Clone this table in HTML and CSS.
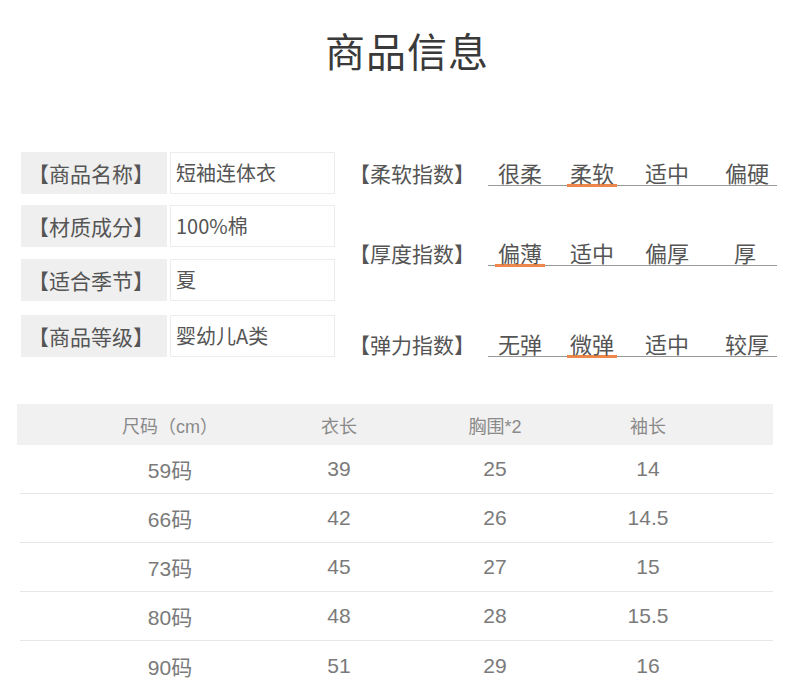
FILE: index.html
```html
<!DOCTYPE html>
<html lang="zh-CN">
<head>
<meta charset="utf-8">
<title>商品信息</title>
<link rel="stylesheet" href="styles.css">
</head>
<body>
<div class="page">
  <h1 class="title">商品信息</h1>

  <section class="info">
    <div class="specs">
      <div class="spec"><div class="spec-label">【商品名称】</div><div class="spec-value">短袖连体衣</div></div>
      <div class="spec"><div class="spec-label">【材质成分】</div><div class="spec-value">100%棉</div></div>
      <div class="spec"><div class="spec-label">【适合季节】</div><div class="spec-value">夏</div></div>
      <div class="spec"><div class="spec-label">【商品等级】</div><div class="spec-value">婴幼儿A类</div></div>
    </div>

    <div class="scales">
      <div class="scale scale-soft">
        <div class="scale-label">【柔软指数】</div>
        <div class="scale-options">
          <span class="opt">很柔</span>
          <span class="opt active">柔软</span>
          <span class="opt">适中</span>
          <span class="opt">偏硬</span>
        </div>
      </div>
      <div class="scale scale-thick">
        <div class="scale-label">【厚度指数】</div>
        <div class="scale-options">
          <span class="opt active">偏薄</span>
          <span class="opt">适中</span>
          <span class="opt">偏厚</span>
          <span class="opt single">厚</span>
        </div>
      </div>
      <div class="scale scale-elastic">
        <div class="scale-label">【弹力指数】</div>
        <div class="scale-options">
          <span class="opt">无弹</span>
          <span class="opt active">微弹</span>
          <span class="opt">适中</span>
          <span class="opt">较厚</span>
        </div>
      </div>
    </div>
  </section>

  <section class="sizes">
    <div class="size-row size-head">
      <div>尺码（cm）</div><div>衣长</div><div>胸围*2</div><div>袖长</div>
    </div>
    <div class="size-row"><div>59码</div><div>39</div><div>25</div><div>14</div></div>
    <div class="size-row"><div>66码</div><div>42</div><div>26</div><div>14.5</div></div>
    <div class="size-row"><div>73码</div><div>45</div><div>27</div><div>15</div></div>
    <div class="size-row"><div>80码</div><div>48</div><div>28</div><div>15.5</div></div>
    <div class="size-row"><div>90码</div><div>51</div><div>29</div><div>16</div></div>
  </section>
</div>
</body>
</html>
```

FILE: styles.css
```css
* { box-sizing: border-box; }

html, body {
  margin: 0;
  padding: 0;
  background: #ffffff;
}

body {
  font-family: "Noto Sans CJK SC", "Noto Sans", sans-serif;
  color: #555;
}

.page {
  width: 790px;
}

.title {
  margin: 0;
  padding: 26px 0 0 24px;
  font-size: 40px;
  line-height: 48px;
  font-weight: 400;
  text-align: center;
  color: #3a3a3a;
  letter-spacing: 1px;
}

/* info block */
.info {
  display: flex;
  margin-top: 78px;
  padding-left: 21px;
}

.specs {
  display: grid;
  row-gap: 11px;
  width: 314px;
  align-content: start;
}

.spec {
  display: flex;
  gap: 3px;
  height: 42px;
}

.spec:nth-child(3) { margin-top: 1px; }
.spec:nth-child(4) { margin-top: 3px; }

.spec-label {
  width: 146px;
  background: #efefef;
  font-size: 21px;
  line-height: 42px;
  color: #555;
  padding-left: 7px;
  white-space: nowrap;
}

.spec-value {
  width: 165px;
  border: 1px solid #ececec;
  font-size: 20px;
  line-height: 40px;
  color: #555;
  padding-left: 5px;
}

.scales {
  display: flex;
  flex-direction: column;
  padding-top: 8px;
  margin-left: 17px;
}

.scale {
  display: flex;
  align-items: flex-end;
}

.scale-thick { margin-top: 54px; }
.scale-elastic { margin-top: 65px; }

.scale-label {
  width: 139px;
  font-size: 21px;
  line-height: 24px;
  color: #555;
  padding-bottom: 1px;
  margin-left: -3px;
  white-space: nowrap;
}

.scale-options {
  display: grid;
  grid-template-columns: 72px 75px 80px 1fr;
  width: 289px;
  padding-left: 10px;
  border-bottom: 1px solid #9a9a9a;
}

.opt {
  justify-self: start;
  font-size: 22px;
  line-height: 24px;
  color: #555;
  padding: 0 3px;
  margin-left: -3px;
  margin-bottom: -2px;
  border-bottom: 3px solid transparent;
}

.opt.active {
  border-bottom-color: #f0874a;
}

.opt.single {
  margin-left: 6px;
}

/* size table */
.sizes {
  margin-top: 47px;
  padding: 0 17px;
}

.size-row {
  display: grid;
  grid-template-columns: 160px 178px 134px 172px;
  padding-left: 70px;
  margin-left: 3px;
  height: 49px;
  align-items: center;
  text-align: center;
  font-family: "Liberation Sans", "Noto Sans CJK SC", sans-serif;
  font-size: 21px;
  color: #7a7a7a;
  border-bottom: 1px solid #e6e6e6;
}

.size-row:last-child {
  border-bottom: none;
}

.size-head {
  height: 41px;
  margin-left: 0;
  padding-left: 73px;
  background: #f1f1f1;
  border-bottom: none;
  font-size: 18px;
  color: #8a8a8a;
}
```
